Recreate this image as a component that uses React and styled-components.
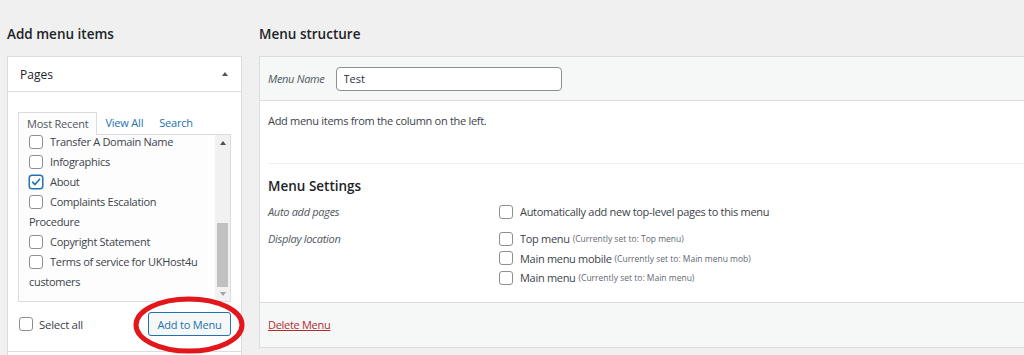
import React from "react";
import styled, { createGlobalStyle } from "styled-components";

const GlobalStyle = createGlobalStyle`
  html, body { margin: 0; padding: 0; height: 355px; overflow: hidden; }
  body {
    background: #f0f0f1;
    font-family: "Open Sans", "Noto Sans", Arial, sans-serif;
    font-size: 11px;
    letter-spacing: -0.3px;
    color: #3c434a;
  }
  * { box-sizing: border-box; }
`;

const Screen = styled.div`
  position: relative;
  width: 1024px;
  height: 355px;
  overflow: hidden;
`;

const Page = styled.div`
  display: flex;
  gap: 17px;
  padding-left: 7px;
  width: 1300px;
`;

const Column = styled.div`
  flex: none;
  width: ${(p) => p.$width}px;
`;

const ColHeading = styled.h2`
  margin: 0 0 13px;
  padding-top: 25px;
  font-size: 13.5px;
  font-weight: 600;
  line-height: 18px;
  letter-spacing: 0;
  color: #1d2327;
`;

const Panel = styled.div`
  border: 1px solid #dcdcde;
  background: #fff;
`;

const SectionHeader = styled.div`
  height: 35px;
  display: flex;
  align-items: center;
  justify-content: space-between;
  padding: 0 13px 0 12px;
  border-bottom: 1px solid #dcdcde;
  font-size: 12px;
  letter-spacing: 0;
  color: #1d2327;
`;

const Caret = styled.span`
  width: 0;
  height: 0;
  border-left: 3.5px solid transparent;
  border-right: 3.5px solid transparent;
  border-bottom: 4.5px solid #50575e;
`;

const SectionBody = styled.div`
  padding: 20px 10px 15px;
  border-bottom: 1px solid #dcdcde;
`;

const Tabs = styled.div`
  display: flex;
  align-items: flex-end;
  height: 22px;
`;

const Tab = styled.span`
  height: 23px;
  line-height: 21px;
  padding: 0 ${(p) => (p.$active ? 8 : 7)}px;
  margin-bottom: ${(p) => (p.$active ? -1 : 0)}px;
  position: relative;
  z-index: 1;
  letter-spacing: -0.2px;
  color: ${(p) => (p.$active ? "#50575e" : "#2271b1")};
  background: ${(p) => (p.$active ? "#fdfdfd" : "transparent")};
  border: 1px solid ${(p) => (p.$active ? "#dcdcde" : "transparent")};
  border-bottom: none;
`;

const TabPanel = styled.div`
  display: flex;
  height: 168px;
  border: 1px solid #dcdcde;
  background: #fdfdfd;
`;

const ListViewport = styled.div`
  flex: 1;
  overflow: hidden;
  padding: 0 8px 0 10px;
`;

const List = styled.div`
  margin-top: -3px;
`;

const Item = styled.label`
  display: block;
  line-height: 20px;
  color: #3c434a;
`;

const Box = styled.span`
  display: inline-flex;
  align-items: center;
  justify-content: center;
  width: 14px;
  height: 14px;
  border: 1px solid ${(p) => (p.$checked ? "#2271b1" : "#8c8f94")};
  border-radius: 3px;
  background: #fff;
  vertical-align: middle;
  margin: -2px 7px 0 0;
  box-shadow: ${(p) => (p.$checked ? "0 0 0 0.5px #2271b1" : "none")};
`;

const Scrollbar = styled.div`
  flex: none;
  width: 15px;
  background: #f1f1f1;
  display: flex;
  flex-direction: column;
  align-items: center;
`;

const ScrollArrow = styled.div`
  height: ${(p) => (p.$up ? 16 : 14)}px;
  display: flex;
  align-items: center;
  justify-content: center;
  &::before {
    content: "";
    width: 0;
    height: 0;
    border-left: 3.5px solid transparent;
    border-right: 3.5px solid transparent;
    ${(p) =>
      p.$up
        ? "border-bottom: 4px solid #505050;"
        : "border-top: 4px solid #a3a3a3;"}
  }
`;

const Thumb = styled.div`
  margin-top: auto;
  width: 11px;
  height: 64px;
  background: #c1c1c1;
`;

const ActionRow = styled.div`
  display: flex;
  align-items: center;
  justify-content: space-between;
  margin-top: 10px;
`;

const SelectAll = styled.label`
  display: flex;
  align-items: center;
  padding-left: 1px;
  font-size: 11.5px;
  color: #3c434a;
  & > span { margin: 0 6px 0 0; }
`;

const Button = styled.button`
  height: 24px;
  padding: 0;
  width: 83px;
  white-space: nowrap;
  border: 1px solid #2271b1;
  border-radius: 3px;
  background: #f6f7f7;
  color: #2271b1;
  font: inherit;
  font-size: 11px;
  letter-spacing: -0.2px;
`;

const NameBar = styled.div`
  height: 44px;
  display: flex;
  align-items: center;
  gap: 11px;
  padding: 0 8px;
  background: #f6f7f7;
  border-bottom: 1px solid #dcdcde;
`;

const Italic = styled.span`
  font-style: italic;
  color: #50575e;
`;

const NameInput = styled.input`
  width: 226px;
  height: 24px;
  padding: 0 7px;
  border: 1px solid #8c8f94;
  border-radius: 4px;
  font: inherit;
  font-size: 11px;
  color: #2c3338;
  background: #fff;
`;

const MenuBody = styled.div`
  padding-left: 8px;
`;

const Intro = styled.p`
  margin: 0;
  padding: 10px 0 32px;
  line-height: 20px;
  border-bottom: 1px solid #f0f0f1;
`;

const Settings = styled.div`
  padding: 12px 0 14px;
`;

const SettingsTitle = styled.h3`
  margin: 0;
  font-size: 13.5px;
  font-weight: 600;
  line-height: 20px;
  letter-spacing: 0;
  color: #1d2327;
`;

const SettingRow = styled.div`
  display: grid;
  grid-template-columns: 231px 1fr;
  margin-top: ${(p) => p.$gap}px;
`;

const RowLabel = styled.span`
  font-style: italic;
  color: #50575e;
  line-height: 20px;
`;

const Options = styled.div`
  display: flex;
  flex-direction: column;
`;

const Option = styled.label`
  display: flex;
  align-items: center;
  line-height: ${(p) => (p.$tight ? 19.5 : 20)}px;
  & > span:first-child { margin: 0 7px 0 0; }
`;

const Note = styled.small`
  font-size: 8.5px;
  letter-spacing: 0;
  color: #646970;
  margin-left: 3px;
`;

const Footer = styled.div`
  height: 45px;
  display: flex;
  align-items: center;
  padding: 0 8px;
  background: #f6f7f7;
  border-top: 1px solid #dcdcde;
`;

const DeleteLink = styled.a`
  color: #b32d2e;
  text-decoration: underline;
  font-size: 11px;
`;

const Annotation = styled.svg`
  position: absolute;
  left: 133px;
  top: 296px;
  pointer-events: none;
`;

function Check({ checked }) {
  return (
    <Box $checked={checked}>
      {checked && (
        <svg width="10" height="10" viewBox="0 0 10 10">
          <path d="M1.5 5.2 L4 7.6 L8.6 2.2" fill="none" stroke="#2271b1" strokeWidth="1.6" strokeLinecap="round" strokeLinejoin="round" />
        </svg>
      )}
    </Box>
  );
}

const pages = [
  { t: "Transfer A Domain Name" },
  { t: "Infographics" },
  { t: "About", c: true },
  { t: "Complaints Escalation Procedure" },
  { t: "Copyright Statement" },
  { t: "Terms of service for UKHost4u customers" },
];

const locations = [
  { t: "Top menu", n: "(Currently set to: Top menu)" },
  { t: "Main menu mobile", n: "(Currently set to: Main menu mob)" },
  { t: "Main menu", n: "(Currently set to: Main menu)" },
];

export default function App() {
  return (
    <Screen>
      <GlobalStyle />
      <Page>
        <Column $width={235}>
          <ColHeading>Add menu items</ColHeading>
          <Panel>
            <SectionHeader>
              <span>Pages</span>
              <Caret />
            </SectionHeader>
            <SectionBody>
              <Tabs>
                <Tab $active>Most Recent</Tab>
                <Tab>View All</Tab>
                <Tab>Search</Tab>
              </Tabs>
              <TabPanel>
                <ListViewport>
                  <List>
                    {pages.map((p) => (
                      <Item key={p.t}>
                        <Check checked={p.c} />
                        {p.t}
                      </Item>
                    ))}
                  </List>
                </ListViewport>
                <Scrollbar>
                  <ScrollArrow $up />
                  <Thumb />
                  <ScrollArrow />
                </Scrollbar>
              </TabPanel>
              <ActionRow>
                <SelectAll>
                  <Check />
                  Select all
                </SelectAll>
                <Button>Add to Menu</Button>
              </ActionRow>
            </SectionBody>
            <SectionHeader />
          </Panel>
        </Column>

        <Column $width={800}>
          <ColHeading>Menu structure</ColHeading>
          <Panel>
            <NameBar>
              <Italic>Menu Name</Italic>
              <NameInput defaultValue="Test" />
            </NameBar>
            <MenuBody>
              <Intro>Add menu items from the column on the left.</Intro>
              <Settings>
                <SettingsTitle>Menu Settings</SettingsTitle>
                <SettingRow $gap={6}>
                  <RowLabel>Auto add pages</RowLabel>
                  <Options>
                    <Option>
                      <Check />
                      Automatically add new top-level pages to this menu
                    </Option>
                  </Options>
                </SettingRow>
                <SettingRow $gap={7}>
                  <RowLabel>Display location</RowLabel>
                  <Options>
                    {locations.map((l) => (
                      <Option key={l.t} $tight>
                        <Check />
                        {l.t}
                        <Note>{l.n}</Note>
                      </Option>
                    ))}
                  </Options>
                </SettingRow>
              </Settings>
            </MenuBody>
            <Footer>
              <DeleteLink href="#">Delete Menu</DeleteLink>
            </Footer>
          </Panel>
        </Column>
      </Page>
      <Annotation width="112" height="58" viewBox="0 0 112 58">
        <ellipse cx="56" cy="29" rx="53" ry="26" fill="none" stroke="#e3161c" strokeWidth="5" />
      </Annotation>
    </Screen>
  );
}
